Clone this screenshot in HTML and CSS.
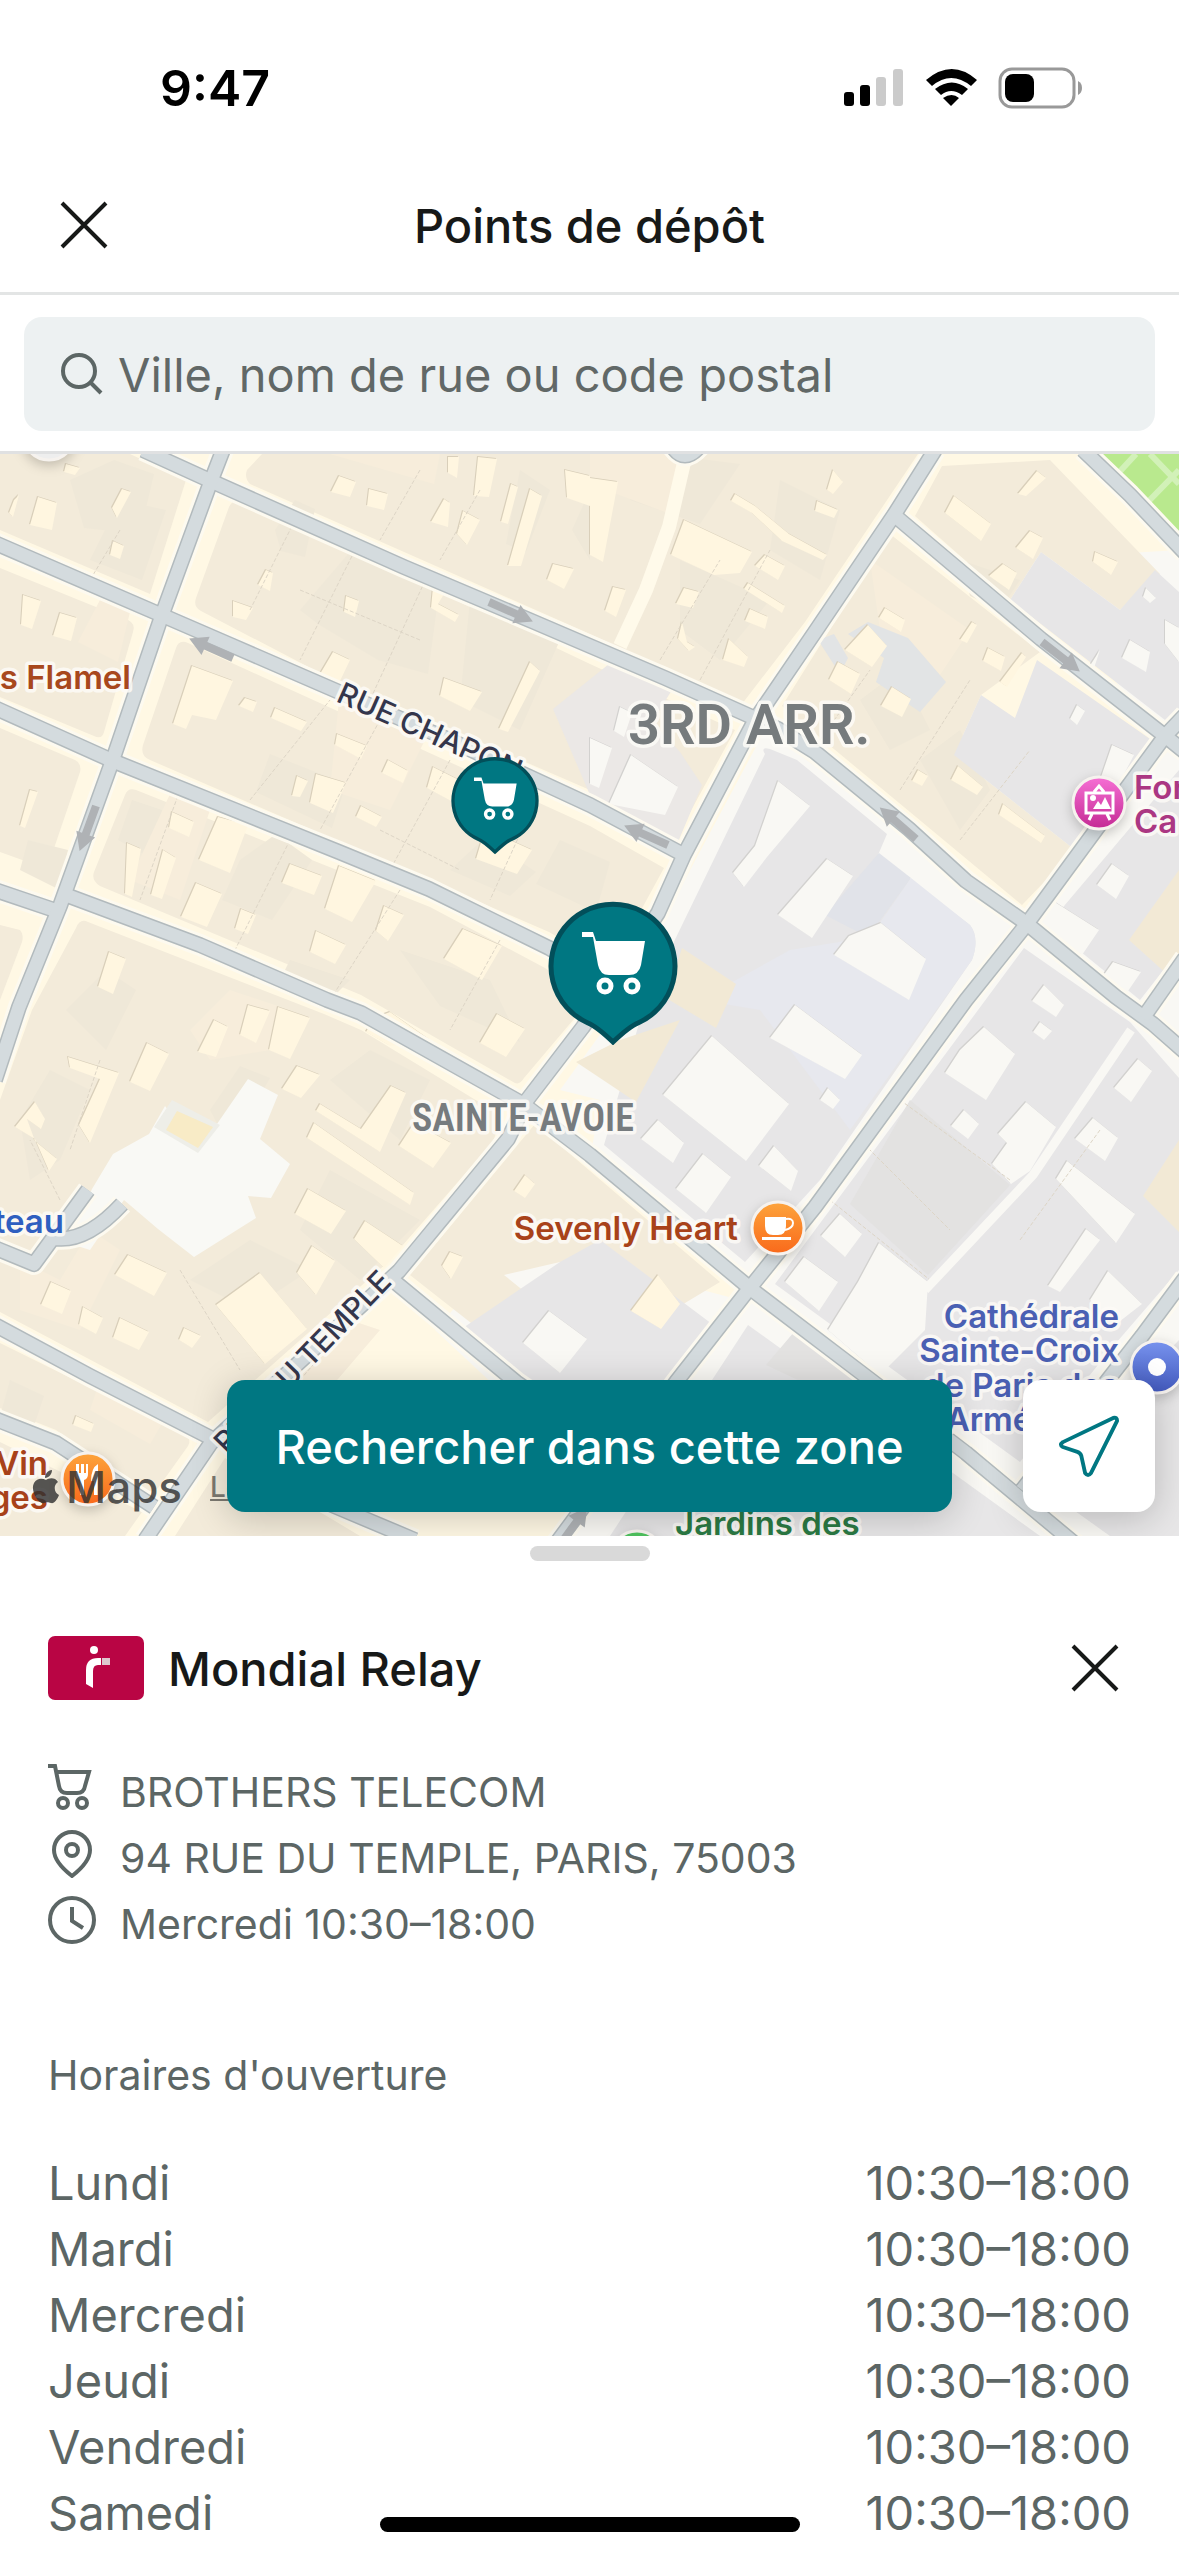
FILE: index.html
```html
<!DOCTYPE html>
<html lang="fr">
<head>
    <meta charset="UTF-8">
    <meta name="viewport" content="width=device-width, initial-scale=1">
    <title>Points de dépôt</title>
    <link rel="stylesheet" href="styles.css">
</head>
<body>
<div class="page">

    <div class="status">
        <span class="status-time">9:47</span>
        <svg class="status-icons" viewBox="846 66 239 44" aria-hidden="true">
            <rect x="846" y="92" width="10" height="14" rx="3"/>
            <rect x="862" y="85" width="10" height="21" rx="3"/>
            <rect x="878" y="77" width="10" height="29" rx="3" fill="#cbcbcb"/>
            <rect x="895" y="69" width="10" height="37" rx="3" fill="#cbcbcb"/>
            <path d="M928 80q26-22 51 0l-6 6q-20-16-39 0zM937 89q17-13 33 0l-6 6q-11-8-21 0zM945 98q9-6 16 0l-8 8z"/>
            <rect x="1002" y="69" width="74" height="38" rx="12" fill="none" stroke="#999" stroke-width="3"/>
            <rect x="1007" y="74" width="29" height="28" rx="8"/>
            <path d="M1080 81q4 2 4 7t-4 7z" fill="#999"/>
        </svg>
    </div>

    <header class="header">
        <button class="close" type="button" aria-label="Fermer">
            <svg viewBox="0 0 48 48"><path d="M2 2l44 44M46 2L2 46"/></svg>
        </button>
        <h1>Points de dépôt</h1>
    </header>

    <form class="search">
        <label class="search-box" for="search">
            <svg viewBox="0 0 44 44"><circle cx="19" cy="19" r="16"/><path d="M30 30l11 11"/></svg>
            <input type="text" id="search" aria-label="Recherche" placeholder="Ville, nom de rue ou code postal">
        </label>
    </form>

    <main class="map">
        <svg class="map-canvas" viewBox="0 454 1179 1082" preserveAspectRatio="xMidYMid slice">
            <defs>
                <linearGradient id="orange" x1="0" y1="0" x2="0" y2="1"><stop offset="0" stop-color="#fda43c"/><stop offset="1" stop-color="#f9691b"/></linearGradient>
                <linearGradient id="pink" x1="0" y1="0" x2="0" y2="1"><stop offset="0" stop-color="#f66fd4"/><stop offset="1" stop-color="#c42a94"/></linearGradient>
                <linearGradient id="blue" x1="0" y1="0" x2="0" y2="1"><stop offset="0" stop-color="#7893ee"/><stop offset="1" stop-color="#4259bd"/></linearGradient>
                <g id="arrow"><path d="M0-4h30v-6l18 10-18 10v-6H0z"/></g>

                <!-- every street once, drawn three times below: verge, edge, surface -->
                <g id="streets">
                    <path d="M143 450L211 481 404 567 534 622 590 646 665 678 752 717 778 729 815 752 909 829 966 881 1026 923 1116 997 1153 1024 1185 1052"/>
                    <path d="M-5 543L166 617 233 646 339 692 452 741 590 805 684 855"/>
                    <path d="M-5 708L113 761 339 852 429 889 549 948 608 984"/>
                    <path d="M-5 890L60 912M66 895L200 945 327 1000 361 1013 523 1104 590 1155 751 1289 868 1378 966 1453 1080 1548"/>
                    <path d="M223 450L211 481 162 615 113 759 60 906 19 1007-5 1080"/>
                    <path d="M935 450L894 515 815 632 755 720 684 855 658 913 583 1027 527 1100 508 1139 399 1271 211 1443 145 1540"/>
                    <path d="M-5 1325L90 1376 211 1438M-5 1419L56 1443 154 1507"/>
                    <path d="M894 515L913 531 1041 639 1165 736 1185 752"/>
                    <path d="M1185 715L1165 736 1026 925 966 1000 815 1207 749 1289 676 1382 555 1545"/>
                    <path d="M1083 450L1130 495 1185 553"/>
                    <path d="M1185 1278L1142 1336 1022 1490"/>
                    <path d="M1185 958L1143 1018"/>
                    <path d="M320 1500L415 1540M395 1282L516 1382 600 1440"/>
                    <path d="M88 1190L34 1264-5 1248M122 1204Q85 1244 53 1238"/>
                    <path d="M672 446Q684 465 700 446"/>
                </g>

                <g id="yards">
                    <path d="M38 497l19 6-5 27-22-5zM122 489l9 3-14 26-5-10zM23 595l18 6-9 28-11-4zM60 613l17 5-6 23-18-5zM113 541l11 5-4 13-10-4zM66 464l14 4-5 7-11-3zM14 500l5-5-6 22-4-4z"/>
                    <path d="M192 666l41 15-17 39-24-5-6 14-13-5zM339 476l17 6-6 15-19-5zM369 489l19 5-4 16-17-4zM333 652l17 8-11 23-19-9zM444 678l38 14-12 19-30-15zM530 662l10 9-32 61-9-3zM433 587l11 7-6 10 21 11-4 7-24-14z"/>
                    <path d="M316 774l30 9-13 30-23-10zM218 817l30 8-18 48-31-13zM196 883l26 11-15 33-26-10zM290 864l32 12-8 19-32-12zM339 866l37 15-24 41-27-13zM463 929l39 17-20 34-38-21zM384 906l20 9-16 26-12-10zM241 909l15 6-8 19-13-5zM316 931l30 14-11 19-25-12z"/>
                    <path d="M485 829l47 21-15 24-41-15zM109 952l17 7-13 35-15-7zM275 708l32 14-6 9-30-13zM337 734l30 12-6 13-26-14zM388 760l20 11-5 12-21-10zM361 806l21 11-6 10-20-10zM433 767l26 13-8 21-24-13zM297 776l11 5-8 16-8-1zM233 601l20 7-7 12-13-3zM346 596l13 5-4 16-11-5z"/>
                    <path d="M444 499l6 4-2 24-17-5zM463 511l17 9-13 25-10-11zM478 457l19 2-8 38-15-1zM530 489l12 7-21 70-13 0zM553 564l21 5-10 20-17-9zM448 457l11 0-2 21-9-5zM511 484l7 3-10 37-7-2zM565 470l25 6 0 30-23-8zM245 698l12 4-4 10-14-6zM127 843l14 6-9 48-7-3zM163 850l13 8-14 41-11-4zM172 812l22 10-5 15-20-9zM30 790l8 2-13 36-5-2zM266 570l7 3-3 18-12-6z"/>
                    <path d="M590 478l28 4-15 80-13-7zM684 520l68 32-12 21-26 2-43-20zM613 587l13 3-10 27-11-6zM765 555l20 11-7 14-23-14zM735 494l20 12 34 28 38 21-4 5-41-19-30-28-21-12zM748 583l37 23-3 7-38-24zM817 501l21 9-4 8-19-7zM684 588l15 4-6 16-17-4zM729 639l19 18-4 10-21-7zM750 609l18 8-3 12-20-8zM833 470l10 12-10 12-6-4zM682 622l5 20 8 5-6 4-11-12z"/>
                    <path d="M954 496l37 28-10 17-36-28zM1037 471l9 7-20 18-8-2zM1030 531l13 7-10 21-17-11zM1095 552l23 10-7 13-18-13zM868 625l19 21-15 21-27-17zM838 662l22 12-9 20-22-14zM892 687l19 12-9 18-21-11zM1022 653l4 4-19 30-7-5zM988 648l17 9-4 14-18-10zM958 766l25 21-6 8-26-15zM1003 804l42 32-4 7-42-28zM918 770l10 6-6 10-10-5zM972 622l5 3-10 18-7-3zM1003 564l14 9-8 17-20-14zM885 608l20 12-4 12-22-14z"/>
                    <path d="M260 1273l47 56-42 35-49-59zM308 1189l38 22-15 23-36-20zM365 1221l38 25-19 22-30-29zM414 1123l37 20-18 25-34-22zM147 1043l22 11-19 37-20-9zM214 1020l14 7-12 30-18-5zM278 1007l32 11-20 41-21-9zM297 1066l23 9-19 23-19-9zM314 1123l100 70-4 12-103-67zM391 1086l15 7-26 59-64-41 4-7 41 25zM497 1014l28 15-19 28-26-14z"/>
                    <path d="M68 1057l51 16-29 70-11-18 21-46-30-11zM128 1255l39 18-13 23-39-21zM51 1282l20 9-9 23-21-9zM120 1318l29 14-10 18-26-12zM83 1307l20 11-7 16-17-9zM312 1246l23 15-19 34-19-22zM525 1175l10 9-10 14-11-7zM450 1252l13 5-12 22-9-13zM184 1328l17 8-9 12-13-8zM35 1102l10 17-4 10-14-10 8 22 22 18-8 12-14-32-20-12zM76 1416l18 8-3 8-18-7zM658 1275l22 29-19 25-30-18zM430 1040l-40-28-16 6-8 14 24 14zM248 1005l22 6-14 32-16-8z"/>
                </g>
                <g id="yards-grey">
                    <path d="M778 781l32 25-43 51-23 30-11-14 22-27zM827 859l26 17-41 62-34-23zM881 923l45 36-17 41-75-45 15-19zM1050 899l49 31-17 25-43-32zM1112 864l17 12-13 23-19-14zM712 1036l77 68-43 57-83-66zM795 1005l67 50-17 24-75-41zM658 1120l26 23-11 20-32-24zM703 1154l28 23-25 36-30-24zM774 1146l24 25-7 20-32-25z"/>
                    <path d="M984 1027l31 27-29 46-41-27 15-23zM1026 1102l30 25-26 44-19 13-19-20 15-21-9-9zM1138 1059l14 12-21 31-17-14zM1093 1118l25 20-13 23-30-22zM1067 1161l68 53-19 29-60-64zM840 1214l22 20-17 23-24-21zM804 1257l34 25-19 29-34-29zM879 1243l49 39-3 48-45 45-52-45 30-48zM1086 1229l14 11-40 52-12-6zM1108 1271l34 33-27 21-25-25z"/>
                    <path d="M964 1110l15 14-11 15-17-13zM1040 1022l12 9-8 9-11-8zM549 1311l38 28-27 34-37-30zM828 1088l12 12-7 9-13-9zM631 755l47 32-13 28-56-11zM590 738l22 10-13 40-9-4zM1100 650l-6 18 24 22-10 14-26-26zM1077 705l8 6-8 14-7-6zM1130 640l20 12-4 20-24-14zM1165 620l14 8 0 34-14-18zM1146 588l10 10-6 5-7-6zM1112 745l22 10-18 34-16-9zM620 707l12 6-8 24-10-6zM1113 962l28 10-26 38-22-20zM1044 985l20 20-8 12-24-16z"/>
                </g>
            </defs>

            <rect y="454" width="1179" height="1082" fill="#fff8e4"/>
            <path fill="#f9f8f4" d="M765 730L1026 918 1179 738V1536H555L740 1290 590 1160 600 1100 560 1090 625 1000 690 870zM1010 560l169-10v190l-20-8zM435 1330l80-90 225 60-150 210-80-110z"/>
            <path fill="#b9e98e" d="M1096 454h83v87z"/>
            <path stroke="#d2f1b8" stroke-width="6" fill="none" d="M1108 468l71 70M1150 454l29 30M1112 480l24-26M1140 510l39-40"/>

            <!-- building blocks -->
            <g fill="#f3ebda">
                <path d="M0 454H130L186 480 150 594 0 530z"/>
                <path d="M245 500Q235 496 229 507L196 598Q193 607 201 611L320 673 590 790 676 838 735 730 590 664z"/>
                <path d="M0 568L128 620Q136 624 133 632L104 732Q102 740 94 736L0 697z"/>
                <path d="M188 643Q179 639 176 648L143 745Q140 756 150 760L549 932 600 962 640 912 664 868 590 826z"/>
                <path d="M0 728L75 760Q82 764 80 772L50 860Q47 868 39 866L0 852z"/>
                <path d="M136 790Q128 787 125 795L94 872Q91 880 100 886L361 995 515 1083Q520 1085 524 1078L590 1000 545 968 430 907z"/>
                <path d="M0 925L20 930Q24 935 22 942L0 1000z"/>
                <path d="M88 922Q80 918 76 928L32 1010 0 1100V1312L208 1422 388 1262 492 1143Q502 1124 492 1110L361 1030 324 1014z"/>
                <path d="M0 1343L184 1434Q192 1439 188 1446L158 1488Q152 1494 144 1490L56 1430 0 1408z"/>
                <path d="M0 1442L142 1512 125 1536H0zM175 1536L225 1458 330 1518 360 1536z"/>
                <path d="M262 454H918L805 622 742 704 590 634 250 484Q244 478 247 470z"/>
                <path d="M942 466L1050 460 1160 574 1120 610 1041 552 1010 600 915 516z"/>
                <path d="M890 534L1040 652 981 695 954 755 1075 850 1022 905 910 812 782 706z"/>
                <path d="M535 1124L720 1282 640 1330 560 1262 504 1275 530 1296 480 1330 410 1275z"/>
            </g>
            <g fill="#efe8d8">
                <path d="M70 480l44-20 40 14-14 60-56-6zM90 560l30-60 46 10-24 70zM275 530l20-30 20 9-10 48-24-6zM300 610l60-70 80 44-12 90-50-14-60-36zM470 600l90 40-40 90-60-30zM270 754l76 30-14 44-76-36zM132 800l30 10-8 50-36-20zM450 870l60 26 26-24-36-24-22-4zM400 950l90 30 30 62-80-36zM240 860l36-26 36 26-40 60-50-20z"/>
                <path d="M520 470l30 20-24 62-20-8zM572 530l18-40v70zM630 500l30-46 80 10-40 60zM680 560l90 40-50 60-40-30zM780 480l60 30-20 70-50-30zM960 560l60 20-20 30-30-14zM920 760l40-30 30 60-30 40zM860 700l40-30 30 60-40 20zM20 1120l30-50 40 20-30 70-30 20zM210 1110l30-44 30 12-40 70zM330 1080l40-30 60 30-30 60zM330 1170l90 50-60 60-60-50zM190 1280l60-40 60 30-60 40zM60 890l-40-20 8-30 40 10zM10 1380l34 16-10 30-34-10z"/>
                <path d="M66 1010l40-40 30 20-30 60zM290 960l60 20-20 20-50-20zM560 840l50 22-14 50-60-28z"/>
            </g>
            <g fill="#f7eddb">
                <path d="M100 600l30 12-12 50-40-20zM340 690l90 40-40 80-60-20zM130 880l50 20 30-90-40-16zM870 560l100 70-40 60-50-60zM330 454h110l-6 30zM590 454h90l-10 60-80-30zM190 1030l40-40 60 20-20 40-60 10zM290 1380l60-60 30 10-60 70-40-10zM20 1260l40 20 30-50 30 20-40 80-60-20zM100 1380l70 30-20 34-60-34z"/>
            </g>
            <g fill="#e7e6e7">
                <path d="M1041 552L1120 610 1155 570 1179 592V708L1165 720 1010 600z"/>
                <path d="M1037 660L1153 741 1075 850 954 755 981 695 1015 718z"/>
                <path d="M553 709L609 664 672 690 652 722 680 752 702 785 678 842 660 838 590 795z" fill="#ebe8e6"/>
                <path d="M765 754Q760 746 770 749L797 760 887 834 878 855 970 925Q980 938 972 960L820 1180 745 1262 604 1145 640 1020 668 954z"/>
                <path d="M1024 948L1130 1022 1179 1078V1270L1110 1350 1020 1462 775 1284z"/>
                <path d="M748 1325L1040 1536H610z"/>
                <path d="M560 1262L600 1240 720 1330 640 1410H540L460 1330z"/>
                <path d="M1179 770L1048 925 1140 1000 1179 950zM1179 1340V1536H1110L1040 1486z"/>
                <path d="M848 634l20-12 40 16 38 44-26 30-44-30 8-24zM818 640l16-6 14 24-8 16z" fill="#e2e4e5"/>
            </g>
            <path fill="#e1e3e9" d="M879 853L911 878 868 937 825 915z"/>
            <path fill="#e7e8ee" d="M911 878L970 925Q980 938 972 960L850 1130 760 1010 700 1000 790 950 870 937z"/>
            <path fill="#e3e2e1" d="M910 1100L1010 1185 928 1275 850 1204zM800 1325l60 50-30 20-64-30z"/>
            <path fill="#f2e9d5" d="M682 948l54 36-20 44-50-30zM620 1040l60-20-44 82-60-40zM1179 1140l-36 56 36 36zM1179 870l-50 70 40 36 10-10z"/>
            <path fill="#f9f9f5" d="M248 1079l30 16-18 44 30 25-19 34-23-2 8 22-62 39-36-28-34-29-34 50-22-7 24-54 21-35 36-20 16-28 34 44z"/>
            <path fill="#eeeee8" d="M172 1100l48 25-22 28-44-26z"/>
            <path fill="#f8ebc6" d="M177 1111l36 16-15 21-32-18z"/>
            <use href="#yards" x="-1" y="-1" fill="#d9cfba"/>
            <use href="#yards" fill="#fff6e0"/>
            <use href="#yards-grey" x="-1" y="-1" fill="#d2d1cf"/>
            <use href="#yards-grey" fill="#f9f8f4"/>

            <path class="parcels" d="M120 530l-30 50M300 510l-50 100M360 540l-60 120M430 570l-60 130M250 800l80-100M380 720l-60 110M450 760l-60 110M540 790l-50 110M180 790l-40 110M290 840l-60 120M400 890l-70 110M500 940l-50 90M420 470l-40 70M480 490l-40 70M660 660l60-100M700 680l70-130M300 590l120 50M380 830l80 40M60 1200l-30-60M180 1270l60 100M300 1380l60-70M100 1060l-30 90M820 740l50-70M900 790l70-110M960 840l70-90M900 1100l110 80M860 1140l90 90M830 1200l100 80M1020 1240l80-110"/>
            <path d="M686 454L669 527 646 590 620 646" stroke="#fffaea" stroke-width="14" fill="none"/>
            <path d="M1131 1030L1033 1175 925 1290" stroke="#f9f8f4" stroke-width="9" fill="none"/>

            <use href="#streets" class="street-verge"/>
            <use href="#streets" class="street-edge"/>
            <use href="#streets" class="street"/>
            <g fill="#afb2b5">
                <use href="#arrow" transform="translate(489 602) rotate(24)"/>
                <use href="#arrow" transform="translate(233 658) rotate(204)"/>
                <use href="#arrow" transform="translate(96 806) rotate(110)"/>
                <use href="#arrow" transform="translate(668 845) rotate(204)"/>
                <use href="#arrow" transform="translate(916 839) rotate(221)"/>
                <use href="#arrow" transform="translate(1042 642) rotate(38)"/>
                <use href="#arrow" transform="translate(559 1546) rotate(-54)"/>
            </g>

            <g class="road-name">
                <text transform="translate(335 701) rotate(24)">RUE CHAPON</text>
                <text transform="translate(393 1283) rotate(-46)" text-anchor="end">RUE DU TEMPLE</text>
            </g>
            <text class="district" x="628" y="744">3RD ARR.</text>
            <text class="quarter" x="412" y="1131">SAINTE-AVOIE</text>

            <g class="poi">
                <text x="131" y="689" text-anchor="end" fill="#a8481d">s Flamel</text>
                <text x="64" y="1233" text-anchor="end" fill="#2f5fc0">teau</text>
                <text x="738" y="1240" text-anchor="end" fill="#a8421a">Sevenly Heart</text>
                <text x="48" y="1475" text-anchor="end" fill="#a8421a">Vin</text>
                <text x="48" y="1509" text-anchor="end" fill="#a8421a">ges</text>
                <text x="1134" y="799" fill="#ab3783">For</text>
                <text x="1134" y="833" fill="#ab3783">Ca</text>
                <text text-anchor="end" fill="#4a60b3"><tspan x="1119" y="1328">Cathédrale</tspan><tspan x="1119" y="1362">Sainte-Croix</tspan><tspan x="1119" y="1397">de Paris des</tspan><tspan x="1119" y="1431">Arméniens</tspan></text>
                <text x="675" y="1535" fill="#2b7a44">Jardins des</text>
            </g>
            <g class="badges">
                <circle cx="778" cy="1228" r="26" fill="url(#orange)"/>
                <circle cx="1099" cy="803" r="26" fill="url(#pink)"/>
                <circle cx="88" cy="1479" r="26" fill="url(#orange)"/>
                <circle cx="1157" cy="1367" r="26" fill="url(#blue)"/>
                <circle cx="637" cy="1557" r="26" fill="#4fc25e"/>
                <circle cx="49" cy="434" r="26" fill="#eee"/>
            </g>
            <g fill="#fff">
                <path d="M765 1217h21v9q0 9-8 9h-5q-8 0-8-9zM762 1237h29v3h-29z"/>
                <path d="M786 1219q7-1 7 4t-8 7" fill="none" stroke="#fff" stroke-width="2"/>
                <circle cx="1157" cy="1367" r="9"/>
                <path d="M76 1464v10q0 5 4 6v15h4v-15q4-1 4-6v-10h-2v9h-2v-9h-3v9h-2v-9zM98 1464q-7 4-7 17h3v14h4z"/>
                <path d="M1093 809l5-8 3 4 4-8 6 12z"/>
                <circle cx="1093" cy="798" r="3"/>
                <path d="M1086 793h27v20h-27zM1094 792l5-6 5 6M1092 814l-3 6M1107 814l3 6" fill="none" stroke="#fff" stroke-width="3"/>
            </g>
        </svg>

        <button class="pin pin-small" type="button" aria-label="Point relais">
            <svg viewBox="0 0 130 144">
                <path class="pin-shape" d="M40 122A62 62 0 1 1 90 122Q82 125 65 141Q48 125 40 122z"/>
                <path fill="#fff" d="M34 31h11l3 9h49l-4 24q-2 10-12 10H61q-9 0-11-10l-5-28H34z"/>
                <g fill="none" stroke="#fff" stroke-width="5"><circle cx="57" cy="85" r="6"/><circle cx="84" cy="85" r="6"/></g>
            </svg>
        </button>
        <button class="pin pin-big" type="button" aria-label="BROTHERS TELECOM">
            <svg viewBox="0 0 130 144">
                <path class="pin-shape" d="M40 122A62 62 0 1 1 90 122Q82 125 65 141Q48 125 40 122z"/>
                <path fill="#fff" d="M34 31h11l3 9h49l-4 24q-2 10-12 10H61q-9 0-11-10l-5-28H34z"/>
                <g fill="none" stroke="#fff" stroke-width="5"><circle cx="57" cy="85" r="6"/><circle cx="84" cy="85" r="6"/></g>
            </svg>
        </button>

        <div class="attribution">
            <svg viewBox="0 0 28 34" aria-hidden="true"><path d="M14 10c3-2 9-3 12 2-5 3-4 11 1 13-2 5-5 9-8 8-3-1-4-1-7 0C6 35-2 20 2 13c3-5 8-5 12-3zM13 8c0-4 3-8 7-8 0 4-3 8-7 8z"/></svg>
            <span>Maps</span>
            <a href="#">Légal</a>
        </div>

        <div class="map-actions">
            <button class="search-zone" type="button">Rechercher dans cette zone</button>
            <button class="locate" type="button" aria-label="Ma position">
                <svg viewBox="0 0 64 64"><path d="M57 3L5 28q-4 3 0 5l15 5q3 1 4 4l4 18q3 4 6 0L61 6q0-4-4-3z"/></svg>
            </button>
        </div>
    </main>

    <section class="sheet">
        <div class="handle"></div>

        <div class="sheet-head">
            <svg class="logo" viewBox="0 0 96 64" aria-hidden="true">
                <rect width="96" height="64" rx="7" fill="#b90544"/>
                <circle cx="46" cy="14" r="4" fill="#fff"/>
                <path d="M38 48V34q0-12 12-12h3v7h-3q-5 0-5 6v17z" fill="#fff"/>
                <path d="M54 22h8v7h-8z" fill="#ddc9cf"/>
            </svg>
            <h2>Mondial Relay</h2>
            <button class="close" type="button" aria-label="Fermer la fiche">
                <svg viewBox="0 0 48 48"><path d="M2 2l44 44M46 2L2 46"/></svg>
            </button>
        </div>

        <ul class="infos">
            <li>
                <svg viewBox="0 0 48 48"><path d="M0 2h7l4 20q1 7 8 7h10q7 0 8-7l4-14H8"/><circle cx="15" cy="39" r="5"/><circle cx="34" cy="39" r="5"/></svg>
                <span>BROTHERS TELECOM</span>
            </li>
            <li>
                <svg viewBox="0 0 48 48"><path d="M24 46Q6 32 6 20a18 18 0 0 1 36 0Q42 32 24 46z"/><circle cx="24" cy="20" r="6"/></svg>
                <span>94 RUE DU TEMPLE, PARIS, 75003</span>
            </li>
            <li>
                <svg viewBox="0 0 48 48"><circle cx="24" cy="24" r="22"/><path d="M24 11v14l11 7"/></svg>
                <span>Mercredi 10:30–18:00</span>
            </li>
        </ul>

        <h3>Horaires d'ouverture</h3>
        <table class="hours">
            <tr><th scope="row">Lundi</th><td>10:30–18:00</td></tr>
            <tr><th scope="row">Mardi</th><td>10:30–18:00</td></tr>
            <tr><th scope="row">Mercredi</th><td>10:30–18:00</td></tr>
            <tr><th scope="row">Jeudi</th><td>10:30–18:00</td></tr>
            <tr><th scope="row">Vendredi</th><td>10:30–18:00</td></tr>
            <tr><th scope="row">Samedi</th><td>10:30–18:00</td></tr>
        </table>
    </section>

    <div class="home-bar"></div>
</div>
</body>
</html>
```
FILE: styles.css
```css
* {
    box-sizing: border-box;
}

body {
    margin: 0;
    font-family: Inter, "Liberation Sans", sans-serif;
    font-size: 47px;
    color: #171918;
    background: #fff;
}

button {
    margin: 0;
    padding: 0;
    border: 0;
    background: none;
    font: inherit;
    color: inherit;
    cursor: pointer;
}

svg {
    display: block;
}

h1, h2, h3 {
    margin: 0;
    font-size: 47px;
    font-weight: 500;
}

.page {
    position: relative;
    display: flex;
    flex-direction: column;
    min-height: 100vh;
}

/* status bar */
.status {
    display: flex;
    align-items: center;
    justify-content: space-between;
    height: 156px;
    padding: 20px 96px 0 160px;
    color: #000;
}

.status-time {
    font-size: 50px;
    font-weight: 600;
}

.status-icons {
    width: 239px;
    height: 44px;
}

/* header */
.header {
    display: grid;
    grid-template-columns: 48px 1fr 48px;
    align-items: center;
    height: 139px;
    padding: 2px 60px 0;
    border-bottom: 3px solid #e3e5e5;
    text-align: center;
}

.close svg {
    width: 48px;
    height: 48px;
    fill: none;
    stroke: #171918;
    stroke-width: 4;
}

.search {
    padding: 22px 24px 20px;
    border-bottom: 3px solid #e0e1e2;
}

.search-box {
    display: flex;
    align-items: center;
    gap: 14px;
    height: 114px;
    padding: 0 36px;
    border-radius: 18px;
    background: #edf1f2;
}

.search-box svg {
    width: 44px;
    height: 44px;
    fill: none;
    stroke: #5c6665;
    stroke-width: 4;
}

.search-box input {
    flex: 1;
    min-width: 0;
    padding: 0;
    border: 0;
    outline: none;
    background: none;
    font: inherit;
    color: #171918;
}

.search-box input::placeholder {
    color: #616867;
    opacity: 1;
}

/* map */
.map {
    position: relative;
    flex: 1;
    min-height: 600px;
    overflow: hidden;
    background: #fff8e4;
}

.map-canvas {
    position: absolute;
    width: 100%;
    height: 100%;
}

.street-verge, .street-edge, .street {
    fill: none;
    stroke-linejoin: round;
}

.street-verge {
    stroke: #fdfaf0;
    stroke-width: 22;
}

.street-edge {
    stroke: #b2babd;
    stroke-width: 16;
}

.street {
    stroke: #d4dbde;
    stroke-width: 13;
}

.parcels {
    fill: none;
    stroke: #ddd5c6;
    stroke-width: 1;
    stroke-dasharray: 4 2;
}

.road-name, .district, .quarter, .poi {
    paint-order: stroke;
    stroke: rgba(253, 251, 247, .85);
    stroke-width: 7;
    stroke-linejoin: round;
}

.road-name {
    font-size: 30px;
    font-weight: 500;
    fill: #34364c;
}

.district {
    font-family: Roboto, sans-serif;
    font-size: 56px;
    font-weight: 600;
    fill: #767b7d;
}

.quarter {
    font-family: "Liberation Sans Narrow", "Roboto Condensed", Roboto, sans-serif;
    font-size: 38px;
    font-weight: 600;
    fill: #767b7e;
}

.poi {
    font-size: 33px;
    font-weight: 600;
}

.badges {
    stroke: #f6f2ee;
    stroke-width: 3;
    filter: drop-shadow(0 4px 6px rgba(0, 0, 0, .2));
}

.pin {
    position: absolute;
    transform: translate(-50%, -100%);
}

.pin svg {
    width: 100%;
}

.pin-shape {
    fill: #007782;
    stroke: #024f5a;
    stroke-width: 5;
}

.pin-small {
    left: 42%;
    top: 37%;
    width: 88px;
}

.pin-big {
    left: 52%;
    top: 55%;
    width: 130px;
    margin-top: -4px;
}

.attribution {
    position: absolute;
    left: 32px;
    bottom: 22px;
    display: flex;
    align-items: center;
    gap: 6px;
    font-size: 44px;
    font-weight: 500;
    color: rgba(50, 50, 50, .82);
}

.attribution svg {
    width: 28px;
    height: 34px;
    fill: rgba(50, 50, 50, .82);
}

.attribution a {
    margin-left: 22px;
    font-size: 28px;
    color: #7b7870;
}

.map-actions {
    position: absolute;
    left: 24px;
    right: 24px;
    bottom: 24px;
    display: grid;
    grid-template-columns: 1fr auto 1fr;
}

.search-zone {
    grid-column: 2;
    height: 132px;
    padding: 0 48px;
    border-radius: 18px;
    background: #007782;
    font-weight: 500;
    color: #fff;
    box-shadow: 0 6px 36px rgba(0, 0, 0, .2);
}

.locate {
    display: grid;
    place-items: center;
    justify-self: end;
    width: 132px;
    height: 132px;
    border-radius: 18px;
    background: #fff;
    box-shadow: 0 6px 36px rgba(0, 0, 0, .2);
}

.locate svg {
    width: 62px;
    height: 62px;
    fill: none;
    stroke: #007782;
    stroke-width: 4;
    stroke-linejoin: round;
}

/* bottom sheet */
.sheet {
    padding: 10px 48px 10px;
    color: #5c6665;
}

.handle {
    width: 120px;
    height: 15px;
    margin: 0 auto 75px;
    border-radius: 8px;
    background: #d9d9d9;
}

.sheet-head {
    display: flex;
    align-items: center;
    gap: 24px;
    height: 64px;
    padding-right: 12px;
    color: #171918;
}

.sheet-head h2 {
    flex: 1;
}

.logo {
    width: 96px;
    height: 64px;
}

.infos {
    display: grid;
    gap: 10px;
    margin: 64px 0 90px;
    padding: 0;
    list-style: none;
    font-size: 41px;
    line-height: 56px;
}

.infos li {
    display: flex;
    gap: 24px;
}

.infos svg {
    flex: none;
    width: 48px;
    height: 48px;
    fill: none;
    stroke: #5c6665;
    stroke-width: 4;
}

.sheet h3 {
    margin-bottom: 42px;
    font-size: 41px;
    font-weight: 400;
    line-height: 66px;
}

.hours {
    width: 100%;
    border-collapse: collapse;
    line-height: 66px;
}

.hours th, .hours td {
    padding: 0;
    font-weight: 400;
    text-align: left;
}

.hours td {
    text-align: right;
}

.home-bar {
    position: absolute;
    left: 50%;
    bottom: 24px;
    width: 420px;
    height: 15px;
    border-radius: 8px;
    background: #000;
    transform: translateX(-50%);
}
```
